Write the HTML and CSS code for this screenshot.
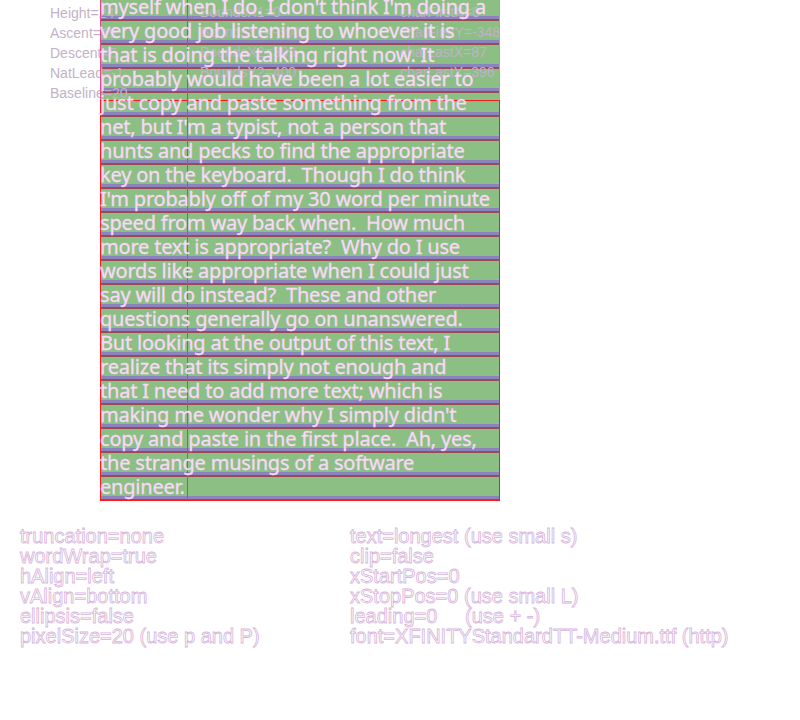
FILE: index.html
```
<!DOCTYPE html>
<html>
<head>
<meta charset="utf-8">
<link rel="stylesheet" href="styles.css">
</head>
<body>
<div class="stage">
  <div class="block">
    <div class="ln"><span class="tx">myself when I do. I don't think I'm doing a</span></div>
    <div class="ln"><span class="tx">very good job listening to whoever it is</span></div>
    <div class="ln"><span class="tx">that is doing the talking right now. It</span></div>
    <div class="ln"><span class="tx">probably would have been a lot easier to</span></div>
    <div class="ln"><span class="tx">just copy and paste something from the</span></div>
    <div class="ln"><span class="tx">net, but I'm a typist, not a person that</span></div>
    <div class="ln"><span class="tx">hunts and pecks to find the appropriate</span></div>
    <div class="ln"><span class="tx">key on the keyboard.  Though I do think</span></div>
    <div class="ln"><span class="tx">I'm probably off of my 30 word per minute</span></div>
    <div class="ln"><span class="tx">speed from way back when.  How much</span></div>
    <div class="ln"><span class="tx">more text is appropriate?  Why do I use</span></div>
    <div class="ln"><span class="tx">words like appropriate when I could just</span></div>
    <div class="ln"><span class="tx">say will do instead?  These and other</span></div>
    <div class="ln"><span class="tx">questions generally go on unanswered.</span></div>
    <div class="ln"><span class="tx">But looking at the output of this text, I</span></div>
    <div class="ln"><span class="tx">realize that its simply not enough and</span></div>
    <div class="ln"><span class="tx">that I need to add more text; which is</span></div>
    <div class="ln"><span class="tx">making me wonder why I simply didn't</span></div>
    <div class="ln"><span class="tx">copy and paste in the first place.  Ah, yes,</span></div>
    <div class="ln"><span class="tx">the strange musings of a software</span></div>
    <div class="ln"><span class="tx">engineer.</span></div>
  </div>

  <div class="topframe"></div>
  <div class="boundsrect"></div>
  <div class="vline"></div>

  <div class="labels lab-left">
    <div class="lb">Height=24</div>
    <div class="lb">Ascent=19</div>
    <div class="lb">Descent=5</div>
    <div class="lb">NatLead=-1</div>
    <div class="lb">Baseline=20</div>
  </div>
  <div class="labels lab-mid">
    <div class="lb">BoundsX1=0</div>
    <div class="lb">BoundsY1=-300</div>
    <div class="lb">BoundsX2=399</div>
    <div class="lb">BoundsY2=400</div>
  </div>
  <div class="labels lab-right">
    <div class="lb">charFirstX=0</div>
    <div class="lb">charFirstY=-348</div>
    <div class="lb">charLastX=87</div>
    <div class="lb">charLastY=396</div>
  </div>

  <div class="info">
    <div class="col">
      <div class="it">truncation=none</div>
      <div class="it">wordWrap=true</div>
      <div class="it">hAlign=left</div>
      <div class="it">vAlign=bottom</div>
      <div class="it">ellipsis=false</div>
      <div class="it">pixelSize=20 (use p and P)</div>
    </div>
    <div class="col">
      <div class="it">text=longest (use small s)</div>
      <div class="it">clip=false</div>
      <div class="it">xStartPos=0</div>
      <div class="it">xStopPos=0 (use small L)</div>
      <div class="it">leading=0     (use + -)</div>
      <div class="it">font=XFINITYStandardTT-Medium.ttf (http)</div>
    </div>
  </div>
</div>
</body>
</html>
```
FILE: styles.css
```
html, body {
  margin: 0;
  padding: 0;
  background: #ffffff;
}

.stage {
  position: relative;
  width: 800px;
  height: 720px;
  overflow: hidden;
}

.block {
  margin-top: -3px;
  margin-left: 100px;
  width: 400px;
  height: 504px;
  display: flex;
  flex-direction: column;
}

.ln {
  height: 24px;
  flex: none;
  line-height: 20px;
  background: linear-gradient(to bottom,
    #8bbf84 0, #8bbf84 19px,
    #8c84be 19px, #8c84be 22px,
    #9a4a55 22px, #9a4a55 24px);
  font-family: "Noto Sans", "Open Sans", sans-serif;
  font-size: 20px;
  letter-spacing: -0.2px;
  white-space: pre;
  color: #fad8f8;
  -webkit-text-stroke: 0.3px #fad8f8;
}

.tx {
  position: relative;
  z-index: 3;
}

.topframe {
  position: absolute;
  left: 100px;
  top: -1px;
  width: 398px;
  height: 101px;
  border-left: 1px solid #e04a8c;
  border-right: 1px solid #d4a62a;
  z-index: 2;
}

.boundsrect {
  position: absolute;
  left: 100px;
  top: 100px;
  width: 398px;
  height: 399px;
  border: 1px solid #ff1a1a;
  z-index: 2;
}

.vline {
  position: absolute;
  left: 187px;
  top: 0;
  width: 1px;
  height: 500px;
  background: #a848c4;
  z-index: 2;
}

.labels {
  position: absolute;
  font-family: "Liberation Sans", Arial, sans-serif;
  font-size: 14px;
  line-height: 20px;
  color: #c2b2c8;
  z-index: 1;
}

.lb {
  white-space: pre;
  height: 20px;
}

.lab-left {
  left: 50px;
  top: 3px;
}

.lab-mid {
  left: 200px;
  top: 2px;
}

.lab-right {
  left: 400px;
  top: 2px;
}

.info {
  margin-top: 25px;
  padding-left: 20px;
  display: grid;
  grid-template-columns: 330px auto;
  font-family: "Liberation Sans", Arial, sans-serif;
  font-size: 20px;
  line-height: 20px;
  color: transparent;
  -webkit-text-stroke: 0.8px #d7b5db;
}

.it {
  white-space: pre;
  height: 20px;
}
```
